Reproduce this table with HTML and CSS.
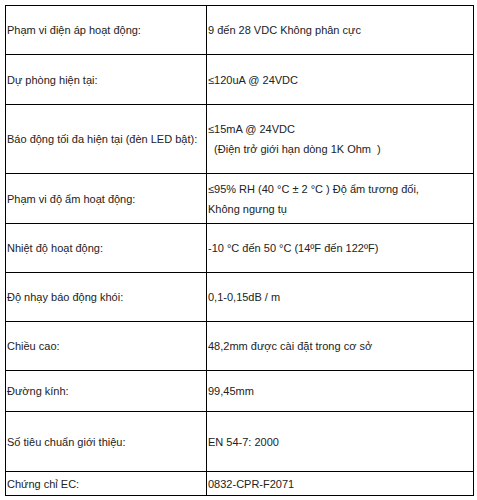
FILE: index.html
```html
<!DOCTYPE html>
<html lang="vi">
<head>
<meta charset="utf-8">
<title>Thông số kỹ thuật</title>
<link rel="stylesheet" href="styles.css">
</head>
<body>
<table class="spec">
  <tbody>
    <tr class="r49"><td class="label">Phạm vi điện áp hoạt động:</td><td class="value">9 đến 28 VDC Không phân cực</td></tr>
    <tr class="r50"><td class="label">Dự phòng hiện tại:</td><td class="value">≤120uA @ 24VDC</td></tr>
    <tr class="r69"><td class="label">Báo động tối đa hiện tại (đèn LED bật):</td><td class="value">≤15mA @ 24VDC<br>&nbsp; (Điện trở giới hạn dòng 1K Ohm&nbsp; )</td></tr>
    <tr class="r50"><td class="label">Phạm vi độ ẩm hoạt động:</td><td class="value">≤95% RH (40 °C ± 2 °C ) Độ ẩm tương đối,<br>Không ngưng tụ</td></tr>
    <tr class="r49"><td class="label">Nhiệt độ hoạt động:</td><td class="value">-10 °C đến 50 °C (14ºF đến 122ºF)</td></tr>
    <tr class="r49"><td class="label">Độ nhạy báo động khói:</td><td class="value">0,1-0,15dB / m</td></tr>
    <tr class="r49"><td class="label">Chiều cao:</td><td class="value">48,2mm được cài đặt trong cơ sở</td></tr>
    <tr class="r41"><td class="label">Đường kính:</td><td class="value">99,45mm</td></tr>
    <tr class="r60"><td class="label">Số tiêu chuẩn giới thiệu:</td><td class="value">EN 54-7: 2000</td></tr>
    <tr class="r24"><td class="label">Chứng chỉ EC:</td><td class="value">0832-CPR-F2071</td></tr>
  </tbody>
</table>
</body>
</html>
```
FILE: styles.css
```css
html, body {
  margin: 0;
  padding: 0;
  background: #ffffff;
}

body {
  padding: 5px 0 0 5px;
  font-family: "Liberation Sans", Arial, sans-serif;
  font-size: 11px;
  color: #222222;
}

.spec {
  border-collapse: collapse;
  width: 469px;
  table-layout: fixed;
}

.spec td {
  border: 1px solid #000000;
  padding: 0 1px;
  line-height: 20px;
  vertical-align: middle;
}

.spec .label {
  width: 198px;
}

.r49 { height: 49px; }
.r50 { height: 50px; }
.r69 { height: 69px; }
.r41 { height: 41px; }
.r60 { height: 60px; }
.r24 { height: 24px; }
```
